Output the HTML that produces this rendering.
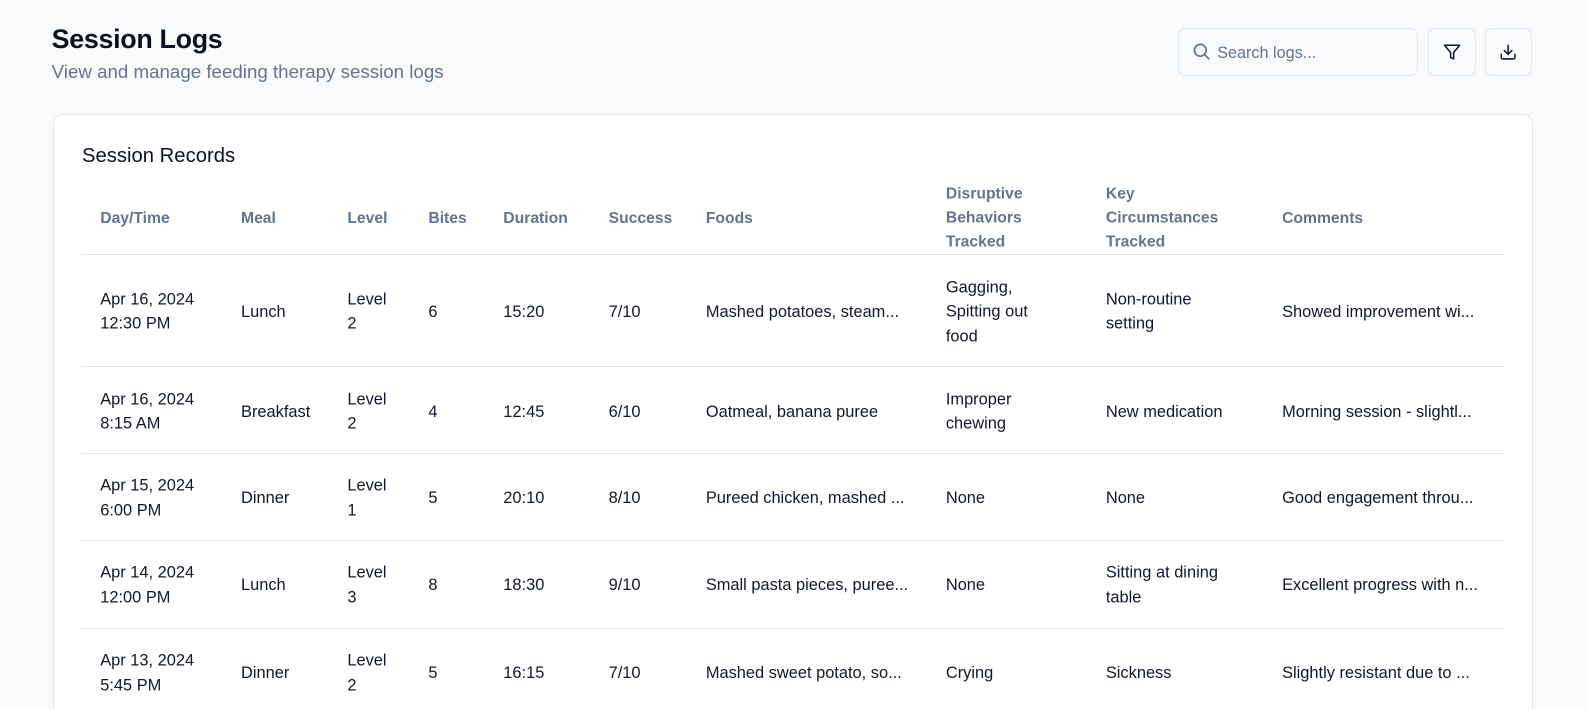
<!DOCTYPE html>
<html><head><meta charset="utf-8"><style>
*{margin:0;padding:0;box-sizing:border-box}
html,body{width:1588px;height:709px;overflow:hidden}
body{background:#f8fafc;font-family:"Liberation Sans",sans-serif;color:#0f172a;position:relative}
#w{position:absolute;left:0;top:0;width:1568px;height:700px;zoom:1.0127}
.a{position:absolute}
h1{position:absolute;left:51px;top:24px;font-size:26.5px;font-weight:700;letter-spacing:-0.3px;color:#0b1220}
.sub{left:51px;top:60px;font-size:18.5px;color:#64748b}
.search{left:1163px;top:28px;width:237px;height:47px;border:1px solid #e2e8f0;border-radius:7px;background:#f8fafc}
.search span{position:absolute;left:38px;top:14px;font-size:16px;color:#64748b}
.btn{top:28px;width:47px;height:47px;border:1px solid #e2e8f0;border-radius:7px;background:#f8fafc;display:flex;align-items:center;justify-content:center}
.card{left:52px;top:113px;width:1462px;height:620px;background:#fff;border:1px solid #e2e8f0;border-radius:10px}
.ct{left:81px;top:143px;font-size:20px;color:#0b1220}
.hd{font-size:15.5px;color:#64748b;font-weight:700;line-height:24px;transform:translateY(-50%)}
.c{font-size:16.2px;line-height:24px;transform:translateY(-50%);white-space:nowrap;color:#111827}
.ln{left:80px;width:1405px;height:1px;background:#e2e8f0}
</style></head><body><div id="w">
<h1>Session Logs</h1>
<div class="a sub">View and manage feeding therapy session logs</div>
<div class="a search"><svg class="a" style="left:12px;top:12px" width="20" height="20" viewBox="0 0 24 24" fill="none" stroke="#64748b" stroke-width="2" stroke-linecap="round"><circle cx="11" cy="11" r="7"/><path d="M21 21l-4.3-4.3"/></svg><span>Search logs...</span></div>
<div class="a btn" style="left:1410px"><svg width="18" height="18" viewBox="0 0 24 24" fill="none" stroke="#0f172a" stroke-width="2" stroke-linejoin="round"><path d="M22 3H2l8 9.5V19l4 2v-8.5z"/></svg></div>
<div class="a btn" style="left:1466px"><svg width="18" height="18" viewBox="0 0 24 24" fill="none" stroke="#0f172a" stroke-width="2" stroke-linecap="round" stroke-linejoin="round"><path d="M21 15v4a2 2 0 0 1-2 2H5a2 2 0 0 1-2-2v-4"/><path d="M7 10l5 5 5-5"/><path d="M12 15V3"/></svg></div>
<div class="a card"></div>
<div class="a ct">Session Records</div>
<div id="t"></div>
</div>
<script>
const X=[99,238,343,423,497,601,697,934,1092,1266];
const H=["Day/Time","Meal","Level","Bites","Duration","Success","Foods","Disruptive<br>Behaviors<br>Tracked","Key<br>Circumstances<br>Tracked","Comments"];
const R=[[308,["Apr 16, 2024<br>12:30 PM","Lunch","Level<br>2","6","15:20","7/10","Mashed potatoes, steam...","Gagging,<br>Spitting out<br>food","Non-routine<br>setting","Showed improvement wi..."]],
[407,["Apr 16, 2024<br>8:15 AM","Breakfast","Level<br>2","4","12:45","6/10","Oatmeal, banana puree","Improper<br>chewing","New medication","Morning session - slightl..."]],
[492,["Apr 15, 2024<br>6:00 PM","Dinner","Level<br>1","5","20:10","8/10","Pureed chicken, mashed ...","None","None","Good engagement throu..."]],
[578,["Apr 14, 2024<br>12:00 PM","Lunch","Level<br>3","8","18:30","9/10","Small pasta pieces, puree...","None","Sitting at dining<br>table","Excellent progress with n..."]],
[665,["Apr 13, 2024<br>5:45 PM","Dinner","Level<br>2","5","16:15","7/10","Mashed sweet potato, so...","Crying","Sickness","Slightly resistant due to ..."]]];
let h="";
H.forEach((t,i)=>h+=`<div class="a hd" style="left:${X[i]}px;top:216px">${t}</div>`);
[251,361,447,533,620].forEach(y=>h+=`<div class="a ln" style="top:${y}px"></div>`);
R.forEach(([y,c])=>c.forEach((t,i)=>h+=`<div class="a c" style="left:${X[i]}px;top:${y}px">${t}</div>`));
document.getElementById("t").innerHTML=h;
</script>
</body></html>
